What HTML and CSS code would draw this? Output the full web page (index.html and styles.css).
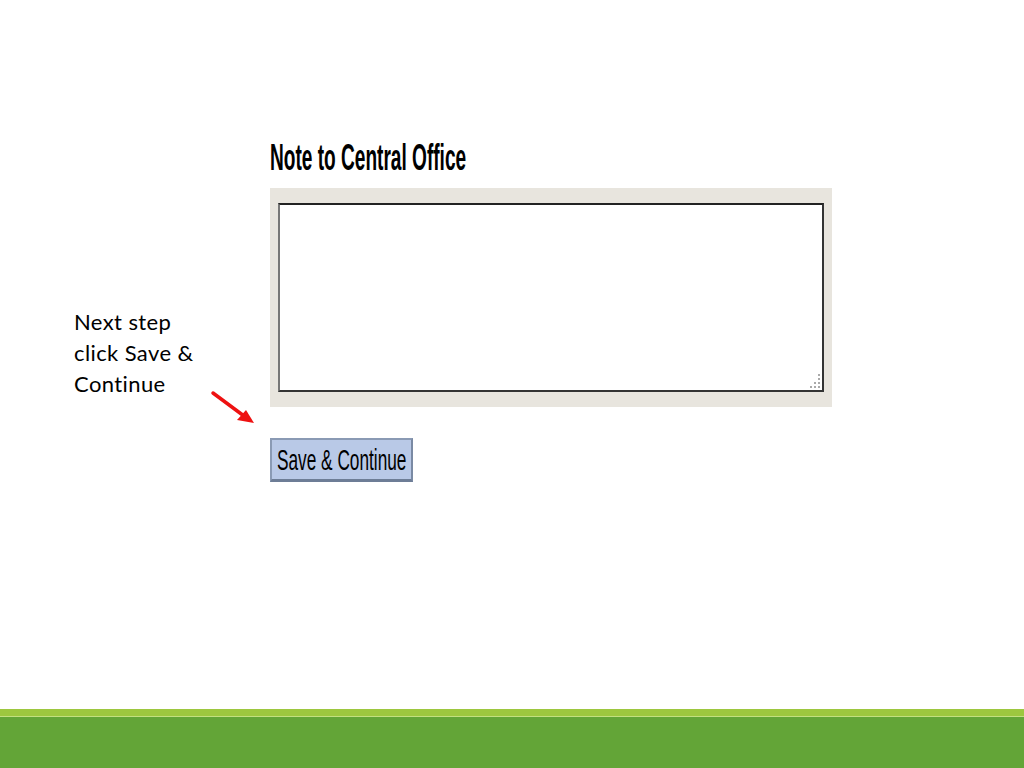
FILE: index.html
```html
<!DOCTYPE html>
<html>
<head>
<meta charset="utf-8">
<link rel="stylesheet" href="styles.css">
</head>
<body>
<div class="slide">
  <div class="stage">
    <div class="side">
      <p class="note">Next step<br>click Save &amp;<br>Continue</p>
      <svg class="arrow" width="50" height="40" viewBox="0 0 50 40">
        <line x1="3" y1="3" x2="34" y2="26" stroke="#ee1111" stroke-width="3.5" stroke-linecap="round"/>
        <polygon points="44,33 27,30 36,20" fill="#ee1111"/>
      </svg>
    </div>
    <div class="form">
      <h1 class="title"><span>Note to Central Office</span></h1>
      <div class="panel">
        <div class="textarea"><span class="grip"></span></div>
      </div>
      <div class="btn"><span>Save &amp; Continue</span></div>
    </div>
  </div>
  <div class="footer">
    <div class="stripe"></div>
    <div class="band"></div>
  </div>
</div>
</body>
</html>
```
FILE: styles.css
```css
html, body { margin: 0; padding: 0; background: #fff; }
.slide { width: 1024px; height: 768px; display: flex; flex-direction: column; overflow: hidden; }
.stage { flex: 1; display: flex; }
.side { width: 270px; padding-top: 307px; box-sizing: border-box; padding-left: 74px; position: relative; }
.note { margin: 0; font-family: Lato, "Open Sans", sans-serif; font-size: 22px; line-height: 30.8px; color: #000; letter-spacing: 0.4px; font-variant-ligatures: none; }
.arrow { position: absolute; left: 210px; top: 390px; }
.form { padding-top: 141px; }
.title { margin: 0 0 13px 0; height: 34px; font-family: "Liberation Sans", Arial, sans-serif; font-weight: bold; font-size: 36px; line-height: 34px; color: #000; white-space: nowrap; }
.title span { display: inline-block; transform: scaleX(0.53); transform-origin: 0 50%; }
.panel { width: 562px; height: 219px; background: #e8e5de; box-sizing: border-box; padding: 15px 8px 15px 8px; }
.textarea { height: 189px; background: #fff; border: 2px solid #333; border-left-color: #777; border-top-color: #222; box-sizing: border-box; position: relative; }
.grip { position: absolute; right: 2px; bottom: 2px; width: 10px; height: 14px;
  background:
    linear-gradient(#aaa,#aaa) 8px 0/2px 2px no-repeat,
    linear-gradient(#aaa,#aaa) 8px 4px/2px 2px no-repeat,
    linear-gradient(#aaa,#aaa) 4px 8px/2px 2px no-repeat,
    linear-gradient(#aaa,#aaa) 8px 8px/2px 2px no-repeat,
    linear-gradient(#aaa,#aaa) 0 12px/2px 2px no-repeat,
    linear-gradient(#aaa,#aaa) 4px 12px/2px 2px no-repeat,
    linear-gradient(#aaa,#aaa) 8px 12px/2px 2px no-repeat; }
.btn { margin-top: 31px; width: 143px; height: 44px; box-sizing: border-box; background: #b9c9e7; border: 2px solid #8a9ab4; border-bottom: 3px solid #6d7d96; border-right-color: #7a8aa4; display: flex; align-items: center; overflow: hidden; padding-left: 5px; }
.btn span { font-family: "Liberation Sans", Arial, sans-serif; font-size: 30px; line-height: 34px; color: #000; white-space: nowrap; display: inline-block; transform: scaleX(0.575); transform-origin: 0 50%; }
.footer { height: 59px; display: flex; flex-direction: column; }
.stripe { height: 7px; background: #9dc73f; border-bottom: 1px solid #c3e07f; }
.band { flex: 1; background: #63a537; }
```
